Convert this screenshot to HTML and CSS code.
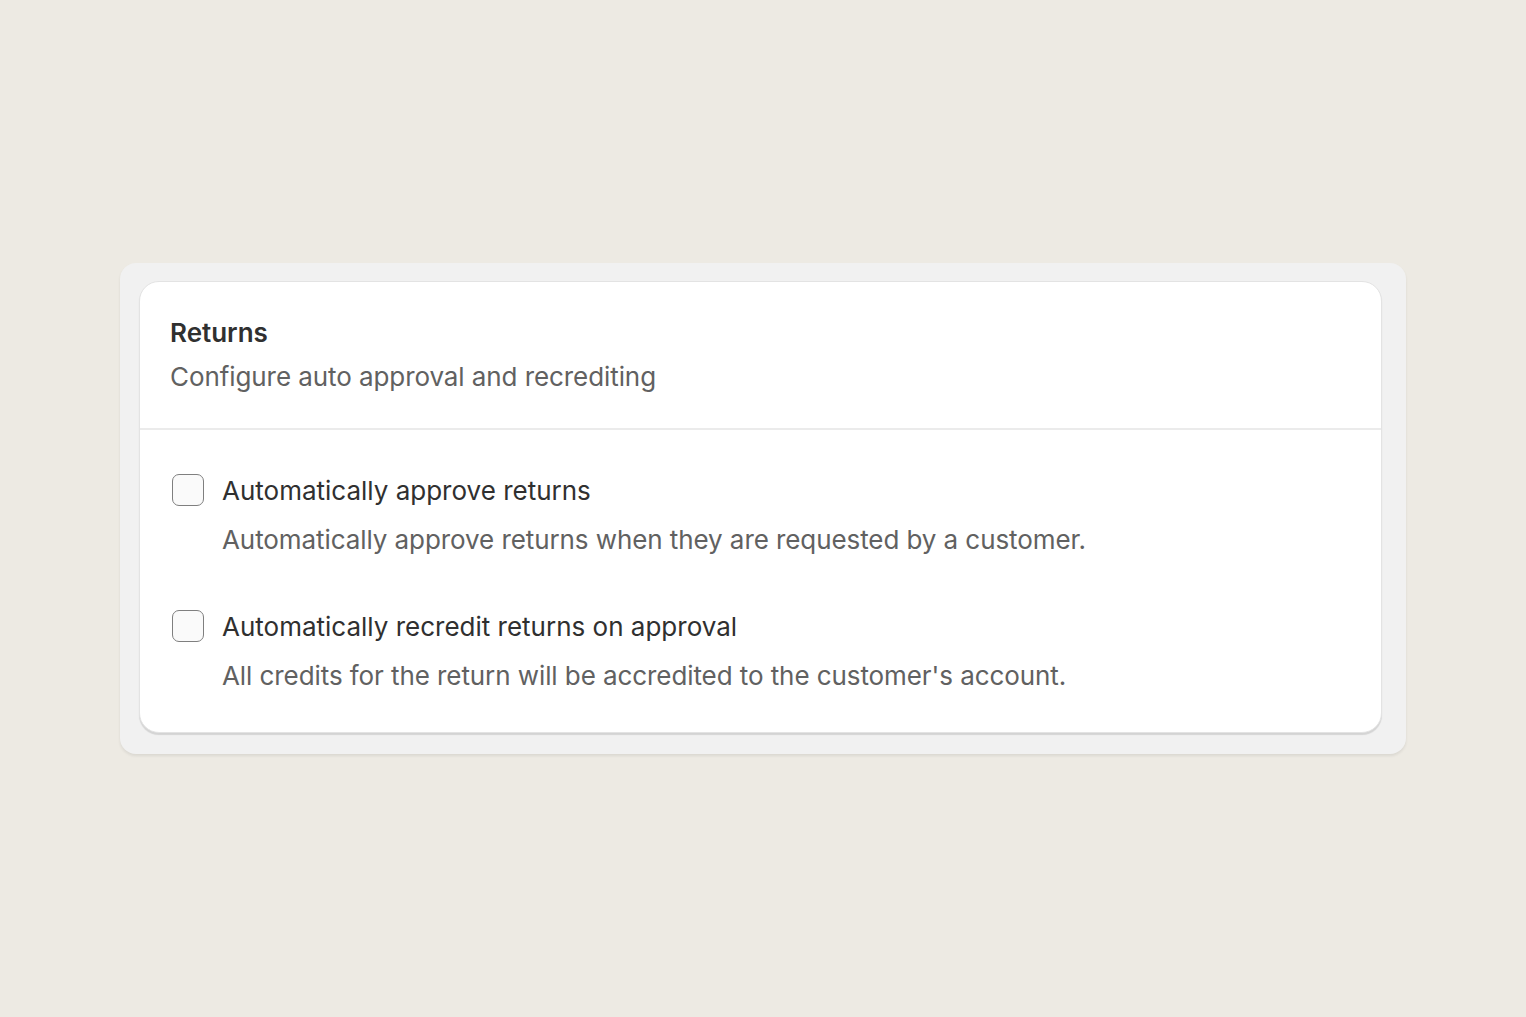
FILE: index.html
```html
<!DOCTYPE html>
<html lang="en">
<head>
<meta charset="utf-8">
<title>Returns</title>
<link rel="stylesheet" href="styles.css">
</head>
<body>
<main class="page">
  <div class="frame">
    <section class="card">
      <header class="card-header">
        <h2 class="card-title">Returns</h2>
        <p class="card-subtitle">Configure auto approval and recrediting</p>
      </header>
      <div class="card-body">
        <div class="option">
          <label class="option-row">
            <span class="checkbox"></span>
            <span class="option-label">Automatically approve returns</span>
          </label>
          <p class="option-help">Automatically approve returns when they are requested by a customer.</p>
        </div>
        <div class="option">
          <label class="option-row">
            <span class="checkbox"></span>
            <span class="option-label">Automatically recredit returns on approval</span>
          </label>
          <p class="option-help">All credits for the return will be accredited to the customer's account.</p>
        </div>
      </div>
    </section>
  </div>
</main>
</body>
</html>
```
FILE: styles.css
```css
* { box-sizing: border-box; }
html, body { margin: 0; padding: 0; }
body {
  background: #edeae3;
  font-family: Inter, "Noto Sans", "Liberation Sans", sans-serif;
  color: #303030;
  min-height: 1017px;
}
.page {
  padding: 263px 120px 0 120px;
}
.frame {
  background: #f1f1f1;
  border-radius: 16px;
  padding: 18px 24px 21px 19px;
  box-shadow: 0 2px 3px rgba(0,0,0,0.08);
}
.card {
  background: #fff;
  border-radius: 20px;
  border: 1px solid #e3e3e3;
  box-shadow: 0 2px 1px rgba(0,0,0,0.12);
  overflow: hidden;
}
.card-header {
  padding: 36px 30px 36px;
  border-bottom: 2px solid #ebebeb;
}
.card-title {
  margin: 0;
  font-size: 26px;
  line-height: 30px;
  font-weight: 600;
  color: #303030;
}
.card-subtitle {
  margin: 14px 0 0;
  font-size: 26px;
  line-height: 30px;
  letter-spacing: -0.08px;
  color: #616161;
}
.card-body {
  padding: 44px 30px 41px 32px;
  display: flex;
  flex-direction: column;
  gap: 55px;
}
.option-row {
  display: flex;
  align-items: center;
  gap: 18px;
}
.checkbox {
  width: 32px;
  height: 32px;
  border: 1.5px solid #7f7f7f;
  border-radius: 7px;
  background: #fafafa;
  flex: none;
}
.option-label {
  font-size: 26px;
  line-height: 32px;
  color: #303030;
  position: relative;
  top: 1px;
}
.option-help {
  margin: 19px 0 0 50px;
  font-size: 26px;
  line-height: 30px;
  letter-spacing: -0.08px;
  color: #616161;
}
```
